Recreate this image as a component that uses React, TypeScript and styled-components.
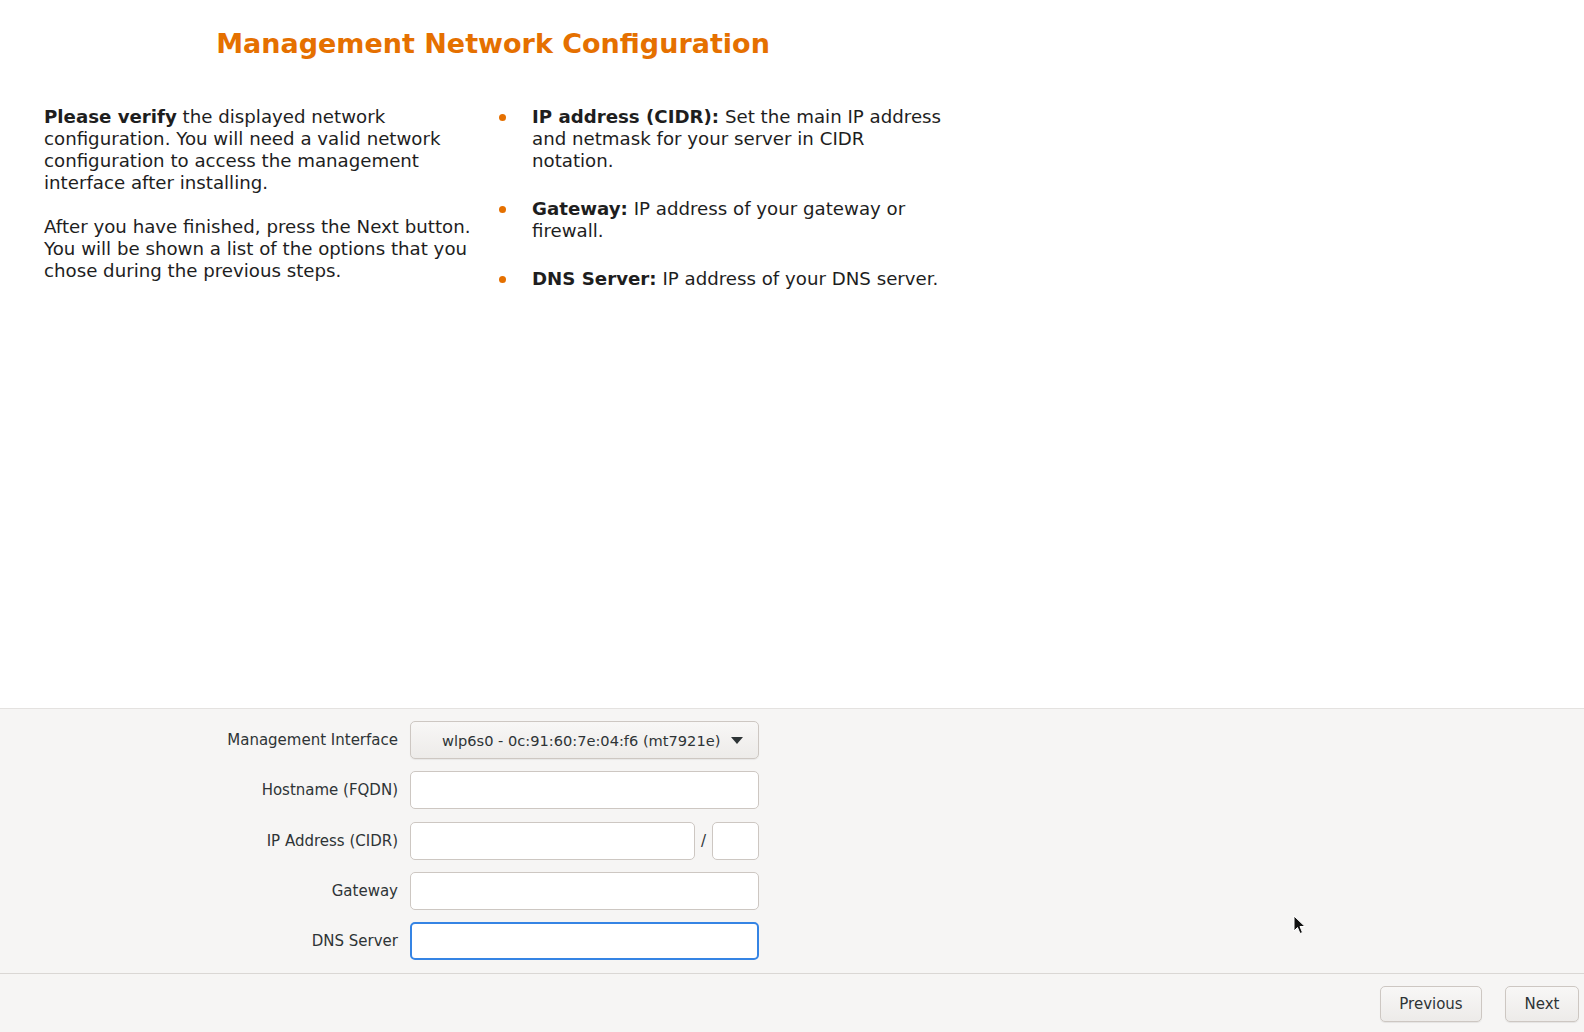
import React from "react";
import styled, { createGlobalStyle } from "styled-components";

const GlobalStyle = createGlobalStyle`
  html, body {
    margin: 0;
    padding: 0;
    background: #ffffff;
  }
  body {
    font-family: "DejaVu Sans", "Liberation Sans", sans-serif;
    color: #1e1e1e;
  }
`;

const orange = "#e57000";
const panelBg = "#f6f5f4";
const borderColor = "#cdc7c2";

const Window = styled.div`
  position: relative;
  width: 1584px;
  height: 1032px;
  display: flex;
  flex-direction: column;
  overflow: hidden;
`;

const InfoArea = styled.section`
  flex: 1;
  background: #ffffff;
  padding: 28px 0 0 44px;
`;

const Title = styled.h1`
  width: 898px;
  margin: 0;
  text-align: center;
  font-size: 27px;
  font-weight: bold;
  color: ${orange};
`;

const Columns = styled.div`
  display: grid;
  grid-template-columns: 430px 450px;
  column-gap: 28px;
  margin-top: 47px;
  font-size: 18.2px;
  line-height: 22px;
`;

const Paragraph = styled.p`
  margin: 0 0 22px;
`;

const BulletList = styled.ul`
  list-style: none;
  margin: 0;
  padding: 0;
  display: flex;
  flex-direction: column;
  gap: 26px;
`;

const BulletItem = styled.li`
  display: flex;
  align-items: flex-start;
`;

const Marker = styled.span`
  flex: none;
  width: 30px;
  height: 22px;
  display: flex;
  align-items: center;

  &::before {
    content: "";
    width: 7px;
    height: 7px;
    margin-left: -3px;
    border-radius: 50%;
    background: ${orange};
  }
`;

const BulletText = styled.span`
  width: 412px;
`;

const FormPanel = styled.section`
  background: ${panelBg};
  border-top: 1px solid #e4e2e0;
  padding: 12px 0 13px 198px;
`;

const FormGrid = styled.div`
  display: grid;
  grid-template-columns: 200px 349px;
  column-gap: 12px;
  row-gap: 12.25px;
  align-items: center;
`;

const Label = styled.label`
  font-size: 15px;
  color: #2e3436;
  text-align: right;
`;

const fieldBase = `
  box-sizing: border-box;
  height: 38px;
  border-radius: 5px;
  font-family: "DejaVu Sans", "Liberation Sans", sans-serif;
  font-size: 15px;
  color: #2e3436;
`;

const TextInput = styled.input<{ focused?: boolean }>`
  ${fieldBase}
  width: 100%;
  background: #ffffff;
  padding: 0 8px;
  outline: none;
  border: ${({ focused }) =>
    focused ? "2px solid #3584e4" : `1px solid ${borderColor}`};
`;

const Combo = styled.button`
  ${fieldBase}
  width: 100%;
  display: flex;
  align-items: center;
  justify-content: space-between;
  padding: 0 15px 0 31px;
  font-size: 14.6px;
  border: 1px solid ${borderColor};
  background: linear-gradient(#f8f7f6, #edebe9);
  box-shadow: 0 1px 1px rgba(0, 0, 0, 0.06);
  cursor: default;
`;

const ComboArrow = styled.span`
  width: 0;
  height: 0;
  border-left: 6px solid transparent;
  border-right: 6px solid transparent;
  border-top: 7px solid #2e3436;
`;

const CidrRow = styled.div`
  display: flex;
  align-items: center;
`;

const CidrMain = styled(TextInput)`
  width: 285px;
`;

const Slash = styled.span`
  width: 17px;
  text-align: center;
  font-size: 15px;
  color: #2e3436;
`;

const CidrMask = styled(TextInput)`
  width: 47px;
`;

const Footer = styled.footer`
  background: ${panelBg};
  border-top: 1px solid #dad7d4;
  height: 59px;
  box-sizing: border-box;
  padding: 12px 5px 0 0;
  display: flex;
  justify-content: flex-end;
  gap: 23px;
`;

const Button = styled.button<{ width: number }>`
  box-sizing: border-box;
  width: ${({ width }) => width}px;
  height: 36px;
  border: 1px solid ${borderColor};
  border-radius: 5px;
  background: linear-gradient(#f8f7f6, #edebe9);
  box-shadow: 0 1px 1px rgba(0, 0, 0, 0.07);
  font-family: "DejaVu Sans", "Liberation Sans", sans-serif;
  font-size: 15px;
  color: #2e3436;
  cursor: default;
`;

const Pointer = styled.svg`
  position: absolute;
  left: 1293px;
  top: 915px;
  pointer-events: none;
`;

const bullets = [
  {
    term: "IP address (CIDR):",
    text: "Set the main IP address and netmask for your server in CIDR notation.",
  },
  { term: "Gateway:", text: "IP address of your gateway or firewall." },
  { term: "DNS Server:", text: "IP address of your DNS server." },
];

const App = () => (
  <Window>
    <GlobalStyle />
    <InfoArea>
      <Title>Management Network Configuration</Title>
      <Columns>
        <div>
          <Paragraph>
            <b>Please verify</b> the displayed network configuration. You will
            need a valid network configuration to access the management
            interface after installing.
          </Paragraph>
          <Paragraph>
            After you have finished, press the Next button. You will be shown a
            list of the options that you chose during the previous steps.
          </Paragraph>
        </div>
        <BulletList>
          {bullets.map((b) => (
            <BulletItem key={b.term}>
              <Marker />
              <BulletText>
                <b>{b.term}</b> {b.text}
              </BulletText>
            </BulletItem>
          ))}
        </BulletList>
      </Columns>
    </InfoArea>

    <FormPanel>
      <FormGrid>
        <Label>Management Interface</Label>
        <Combo>
          <span>wlp6s0 - 0c:91:60:7e:04:f6 (mt7921e)</span>
          <ComboArrow />
        </Combo>

        <Label>Hostname (FQDN)</Label>
        <TextInput />

        <Label>IP Address (CIDR)</Label>
        <CidrRow>
          <CidrMain />
          <Slash>/</Slash>
          <CidrMask />
        </CidrRow>

        <Label>Gateway</Label>
        <TextInput />

        <Label>DNS Server</Label>
        <TextInput focused />
      </FormGrid>
    </FormPanel>

    <Footer>
      <Button width={102}>Previous</Button>
      <Button width={74}>Next</Button>
    </Footer>

    <Pointer width="14" height="20" viewBox="0 0 14 20">
      <path
        d="M1 1 L1 16 L4.5 12.5 L7 18.5 L9.5 17.5 L7 11.5 L12 11.5 Z"
        fill="#111"
        stroke="#fff"
        strokeWidth="1"
        strokeLinejoin="round"
      />
    </Pointer>
  </Window>
);

export default App;
